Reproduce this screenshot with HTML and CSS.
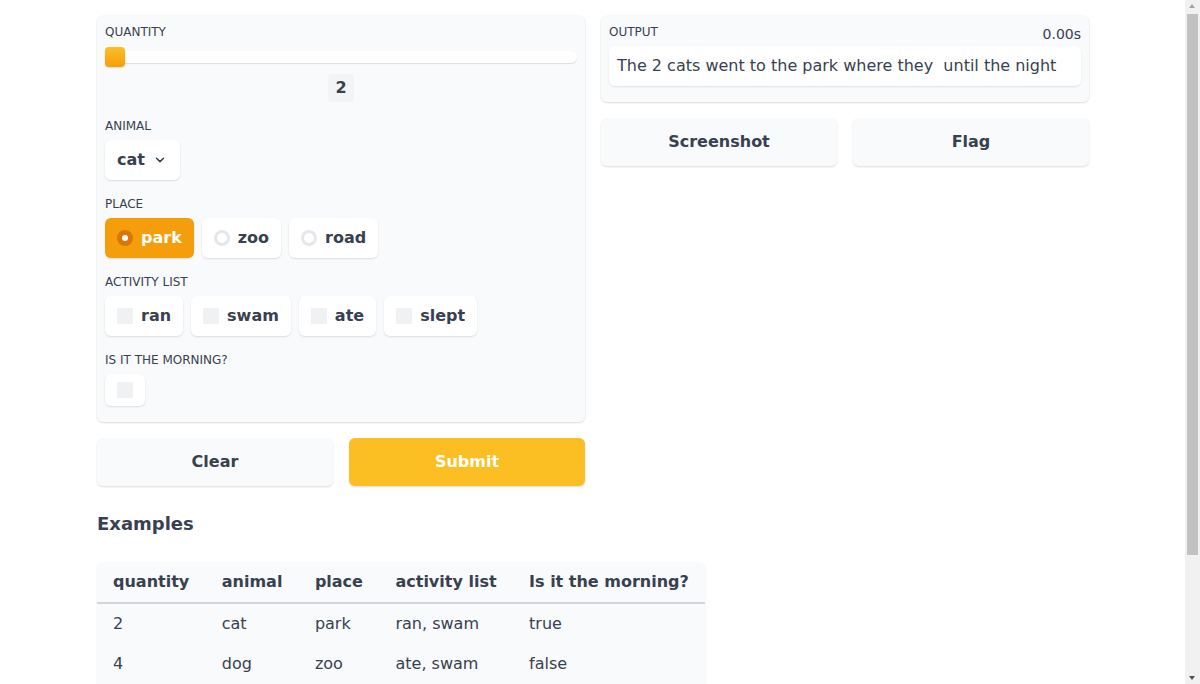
FILE: index.html
```html
<!DOCTYPE html>
<html lang="en">
<head>
<meta charset="utf-8">
<title>Sentence Builder</title>
<link rel="stylesheet" href="styles.css">
</head>
<body>
<div class="app">
  <div class="columns">
    <div class="col">
      <div class="panel">
        <div class="label">Quantity</div>
        <div class="slider">
          <div class="track"></div>
          <div class="thumb"></div>
        </div>
        <div class="num-row"><span class="num">2</span></div>

        <div class="label gap">Animal</div>
        <div class="dropdown">
          <span>cat</span>
          <svg class="chev" width="10" height="6" viewBox="0 0 10 6"><path d="M1.5 1.2 L5 4.6 L8.5 1.2" fill="none" stroke="#374151" stroke-width="1.5" stroke-linecap="round" stroke-linejoin="round"/></svg>
        </div>

        <div class="label gap">Place</div>
        <div class="options">
          <div class="opt selected"><span class="radio on"></span>park</div>
          <div class="opt"><span class="radio"></span>zoo</div>
          <div class="opt"><span class="radio"></span>road</div>
        </div>

        <div class="label gap">Activity list</div>
        <div class="options">
          <div class="opt"><span class="check"></span>ran</div>
          <div class="opt"><span class="check"></span>swam</div>
          <div class="opt"><span class="check"></span>ate</div>
          <div class="opt"><span class="check"></span>slept</div>
        </div>

        <div class="label gap">Is it the morning?</div>
        <div class="options">
          <div class="opt single"><span class="check"></span></div>
        </div>
      </div>
      <div class="btn-row">
        <button class="btn">Clear</button>
        <button class="btn primary">Submit</button>
      </div>
    </div>

    <div class="col">
      <div class="panel out-panel">
        <div class="label-row">
          <div class="label">Output</div>
          <div class="timer">0.00s</div>
        </div>
        <div class="output">The 2 cats went to the park where they  until the night</div>
      </div>
      <div class="btn-row">
        <button class="btn">Screenshot</button>
        <button class="btn">Flag</button>
      </div>
    </div>
  </div>

  <h2 class="examples-title">Examples</h2>
  <div class="table-wrap">
    <table class="examples">
      <thead>
        <tr><th>quantity</th><th>animal</th><th>place</th><th>activity list</th><th>Is it the morning?</th></tr>
      </thead>
      <tbody>
        <tr><td>2</td><td>cat</td><td>park</td><td>ran, swam</td><td>true</td></tr>
        <tr><td>4</td><td>dog</td><td>zoo</td><td>ate, swam</td><td>false</td></tr>
        <tr><td>10</td><td>bird</td><td>road</td><td>ran</td><td>false</td></tr>
        <tr><td>8</td><td>cat</td><td>zoo</td><td>ate</td><td>true</td></tr>
      </tbody>
    </table>
  </div>
</div>

<div class="fake-scrollbar" aria-hidden="true">
  <span class="sb-up"></span>
  <span class="sb-thumb"></span>
  <span class="sb-down"></span>
</div>
</body>
</html>
```

FILE: styles.css
```css
html, body {
  margin: 0;
  padding: 0;
  background: #ffffff;
}
body {
  font-family: "DejaVu Sans", "Liberation Sans", sans-serif;
  color: #374151;
  padding-right: 14px;
}
.app {
  width: 992px;
  margin: 0 auto;
  padding: 16px 0 66px;
}
.columns {
  display: flex;
  gap: 16px;
  align-items: flex-start;
}
.col {
  flex: 1 1 0;
  display: flex;
  flex-direction: column;
  gap: 16px;
}
.panel {
  background: #f9fafb;
  border-radius: 6px;
  box-shadow: 0 1px 2px rgba(0,0,0,0.12), 0 0 0 1px rgba(0,0,0,0.02);
  padding: 8px 8px 16px;
}
.label {
  font-size: 12px;
  line-height: 16px;
  text-transform: uppercase;
  color: #374151;
}
.label.gap {
  margin-top: 16px;
}
.slider {
  position: relative;
  height: 24px;
  margin-top: 5px;
  display: flex;
  align-items: center;
}
.track {
  flex: 1;
  height: 12px;
  background: #ffffff;
  border-radius: 6px;
  box-shadow: 0 1px 1px rgba(0,0,0,0.12);
}
.thumb {
  position: absolute;
  left: 0;
  top: 2px;
  width: 20px;
  height: 20px;
  border-radius: 4px;
  background: linear-gradient(#fbbf24, #f59e0b);
  box-shadow: 0 1px 2px rgba(0,0,0,0.15);
}
.num-row {
  display: flex;
  justify-content: center;
  margin-top: 5px;
}
.num {
  width: 26px;
  height: 28px;
  border-radius: 4px;
  background: #f3f4f6;
  font-weight: bold;
  font-size: 16px;
  line-height: 28px;
  text-align: center;
  color: #374151;
}
.dropdown {
  margin-top: 6px;
  display: inline-flex;
  align-items: center;
  gap: 10px;
  height: 40px;
  padding: 0 15px 1px 12px;
  background: #ffffff;
  border-radius: 6px;
  box-shadow: 0 1px 2px rgba(0,0,0,0.12);
  font-size: 16px;
  font-weight: bold;
  box-sizing: border-box;
}
.options {
  display: flex;
  gap: 8px;
  margin-top: 6px;
}
.opt {
  display: flex;
  align-items: center;
  gap: 8px;
  height: 40px;
  padding: 0 12px 1px;
  box-sizing: border-box;
  background: #ffffff;
  border-radius: 6px;
  box-shadow: 0 1px 2px rgba(0,0,0,0.12);
  font-size: 16px;
  font-weight: bold;
  color: #374151;
}
.opt.selected {
  background: #f59e0b;
  color: #ffffff;
}
.opt.single {
  height: 32px;
  width: 40px;
  padding-bottom: 0;
}
.radio {
  width: 16px;
  height: 16px;
  box-sizing: border-box;
  border-radius: 50%;
  border: 3px solid #e5e7eb;
  background: #ffffff;
  margin-top: 1px;
}
.radio.on {
  border: 5px solid #d97706;
  background: #ffffff;
}
.check {
  width: 16px;
  height: 16px;
  border-radius: 1px;
  background: #f0f1f3;
  margin-top: 1px;
}
.opt.single .check {
  margin-top: 0;
}
.btn-row {
  display: flex;
  gap: 16px;
}
.btn {
  flex: 1 1 0;
  height: 48px;
  border: none;
  border-radius: 6px;
  background: #f9fafb;
  box-shadow: 0 1px 2px rgba(0,0,0,0.14);
  font-family: "DejaVu Sans", "Liberation Sans", sans-serif;
  font-size: 16px;
  font-weight: bold;
  color: #374151;
  padding: 0 0 2px;
}
.btn.primary {
  background: #fbbf24;
  color: #ffffff;
}
.label-row {
  display: flex;
  justify-content: space-between;
  align-items: flex-start;
  height: 16px;
}
.timer {
  font-size: 14px;
  line-height: 16px;
  margin-top: 2px;
  color: #374151;
}
.output {
  margin-top: 6px;
  height: 40px;
  box-sizing: border-box;
  padding: 8px;
  background: #ffffff;
  border-radius: 6px;
  box-shadow: 0 1px 2px rgba(0,0,0,0.1);
  font-size: 16px;
  line-height: 24px;
  white-space: pre;
  color: #374151;
}
.examples-title {
  margin: 24px 0 24px;
  font-size: 18px;
  line-height: 28px;
  font-weight: bold;
  color: #374151;
}
.table-wrap {
  display: inline-block;
  border-radius: 6px;
  overflow: hidden;
  background: #f9fafb;
  box-shadow: 0 1px 2px rgba(0,0,0,0.1);
}
.examples {
  border-collapse: collapse;
  font-size: 16px;
  line-height: 24px;
  color: #374151;
}
.examples th {
  text-align: left;
  font-weight: bold;
  padding: 8px 16.5px 8px 16px;
  border-bottom: 2px solid #d1d5db;
  white-space: nowrap;
}
.examples td {
  padding: 8px 16.5px 8px 16px;
  white-space: nowrap;
}

/* Overlay imitating the browser's vertical scrollbar in the reference */
.fake-scrollbar {
  position: fixed;
  top: 0;
  right: 0;
  width: 15px;
  height: 100%;
  background: #f1f1f1;
}
.sb-thumb {
  position: absolute;
  left: 2px;
  top: 14px;
  width: 11px;
  height: 541px;
  background: #c1c1c1;
}
.sb-up, .sb-down {
  position: absolute;
  left: 4px;
  width: 0;
  height: 0;
  border-left: 3.5px solid transparent;
  border-right: 3.5px solid transparent;
}
.sb-up {
  top: 4px;
  border-bottom: 4px solid #a3a3a3;
}
.sb-down {
  bottom: 4px;
  border-top: 4px solid #505050;
}
```
